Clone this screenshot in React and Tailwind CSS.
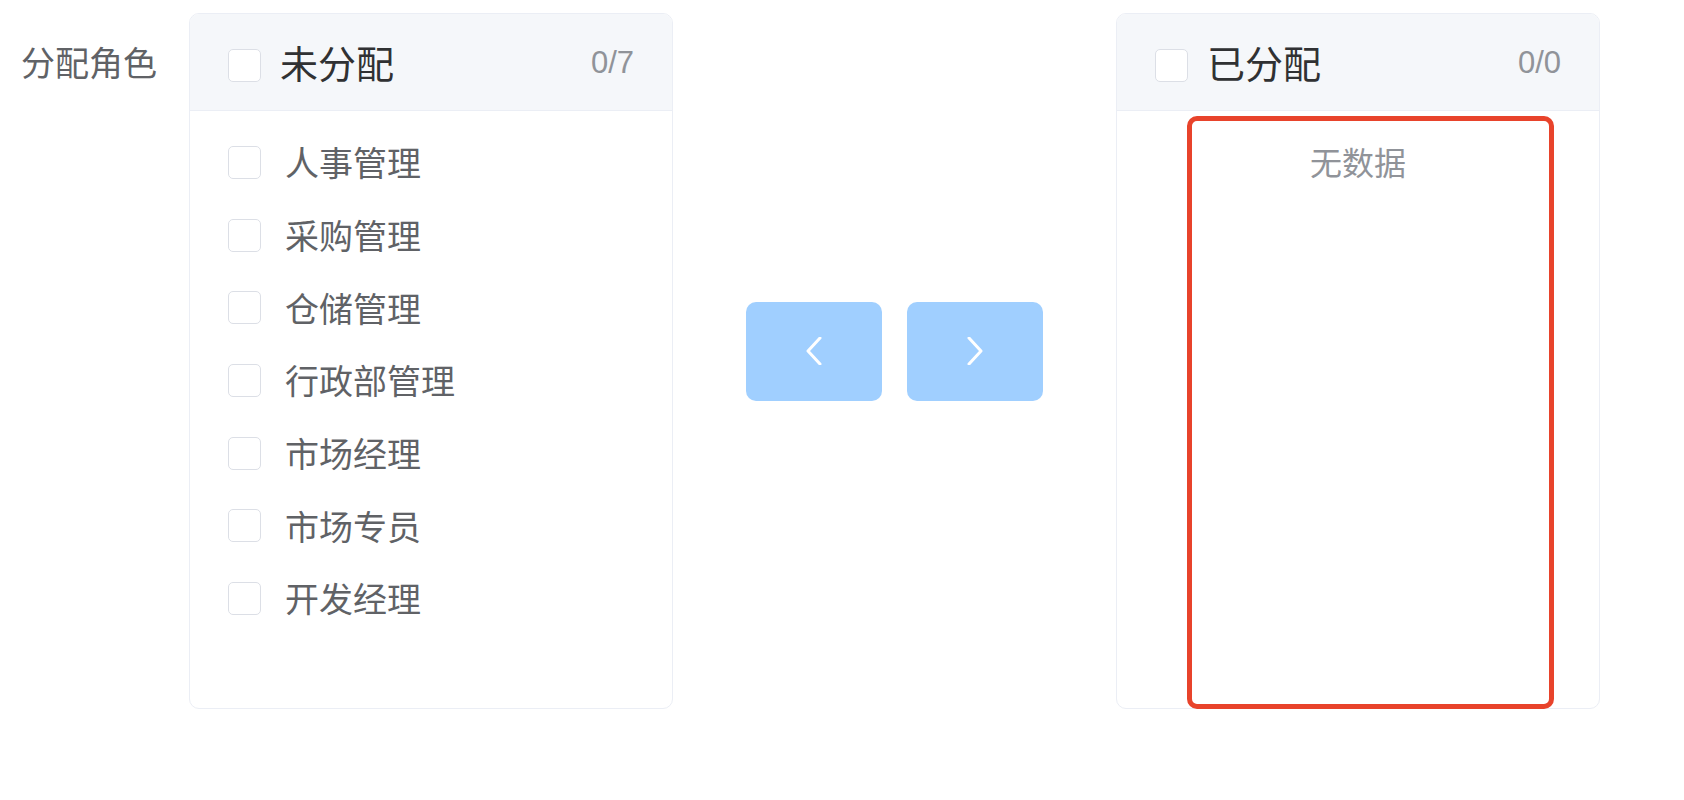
import { useState } from "react";

const roles = ["人事管理", "采购管理", "仓储管理", "行政部管理", "市场经理", "市场专员", "开发经理"];

const cjk = "font-['Noto_Sans_CJK_SC','Noto_Sans',sans-serif]";

function Box({ className = "" }) {
  return (
    <span
      className={`box-border block h-[33px] w-[33px] shrink-0 rounded-[5px] border border-[#dcdfe6] bg-white ${className}`}
    />
  );
}

function Panel({ title, items, children }) {
  return (
    <div className="box-border flex h-[696px] w-[484px] shrink-0 flex-col overflow-hidden rounded-[10px] border border-[#ebeef5] bg-white">
      <div className="box-border flex h-[97px] shrink-0 items-center border-b border-[#ebeef5] bg-[#f5f7fa] pl-[38px] pr-[38px]">
        <Box className="mt-[7px]" />
        <span className={`ml-[19px] text-[38px] leading-none text-[#303133] ${cjk}`}>{title}</span>
        <span className="ml-auto font-['Liberation_Sans',sans-serif] text-[31px] leading-none text-[#909399]">
          0/{items.length}
        </span>
      </div>
      <div className="relative flex-1 pt-[15px]">
        {items.map((item) => (
          <div key={item} className="flex h-[72.7px] items-center pl-[38px]">
            <Box />
            <span className={`ml-[24px] text-[34px] leading-none text-[#606266] ${cjk}`}>{item}</span>
          </div>
        ))}
        {children}
      </div>
    </div>
  );
}

function Chevron({ dir }) {
  return (
    <svg width="16" height="28" viewBox="0 0 16 28" fill="none">
      <polyline
        points={dir === "left" ? "14,1 2,14 14,27" : "2,1 14,14 2,27"}
        stroke="white"
        strokeWidth="3"
        strokeLinecap="round"
        strokeLinejoin="round"
      />
    </svg>
  );
}

export default function App() {
  const [assigned] = useState([]);

  return (
    <div className="flex min-h-[800px] items-start bg-white pt-[13px]">
      <div className={`ml-[21px] w-[168px] shrink-0 text-[34px] leading-[97px] text-[#606266] ${cjk}`}>分配角色</div>

      <Panel title="未分配" items={roles} />

      <div className="mx-[73px] flex h-[696px] items-center gap-[25px] pb-[20px]">
        <button className="flex h-[99px] w-[136px] items-center justify-center rounded-[10px] bg-[#a0cfff]" type="button">
          <Chevron dir="left" />
        </button>
        <button className="flex h-[99px] w-[136px] items-center justify-center rounded-[10px] bg-[#a0cfff]" type="button">
          <Chevron dir="right" />
        </button>
      </div>

      <div className="relative">
        <Panel title="已分配" items={assigned}>
          <div className={`absolute left-0 right-0 top-[14px] text-center text-[32px] leading-[72px] text-[#909399] ${cjk}`}>
            无数据
          </div>
        </Panel>
        <div className="pointer-events-none absolute left-[71px] top-[103px] h-[593px] w-[367px] rounded-[10px] border-[5px] border-[#e8432b]" />
      </div>
    </div>
  );
}
